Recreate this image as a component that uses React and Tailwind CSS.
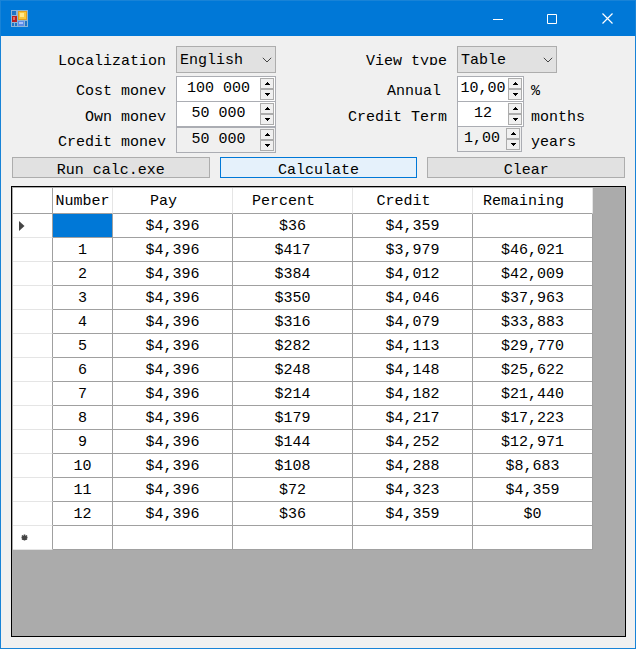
import React, { useState } from "react";

const rows = [
  ["", "$4,396", "$36", "$4,359", ""],
  ["1", "$4,396", "$417", "$3,979", "$46,021"],
  ["2", "$4,396", "$384", "$4,012", "$42,009"],
  ["3", "$4,396", "$350", "$4,046", "$37,963"],
  ["4", "$4,396", "$316", "$4,079", "$33,883"],
  ["5", "$4,396", "$282", "$4,113", "$29,770"],
  ["6", "$4,396", "$248", "$4,148", "$25,622"],
  ["7", "$4,396", "$214", "$4,182", "$21,440"],
  ["8", "$4,396", "$179", "$4,217", "$17,223"],
  ["9", "$4,396", "$144", "$4,252", "$12,971"],
  ["10", "$4,396", "$108", "$4,288", "$8,683"],
  ["11", "$4,396", "$72", "$4,323", "$4,359"],
  ["12", "$4,396", "$36", "$4,359", "$0"],
  ["", "", "", "", ""],
];

function AppIcon() {
  return (
    <svg width="17" height="17" viewBox="0 0 17 17" shapeRendering="crispEdges" aria-hidden="true">
      <rect width="17" height="17" fill="#8db5d6" />
      <rect x="1" y="1" width="4" height="4" fill="#1f74c4" />
      <rect x="7" y="1" width="9" height="9" fill="#e0a020" />
      <rect x="8" y="2" width="7" height="7" fill="#f8c83c" />
      <rect x="9" y="3" width="4" height="4" fill="#ffe88a" />
      <rect x="1" y="6" width="5" height="6" fill="#b82020" />
      <rect x="2" y="7" width="2" height="3" fill="#e06a60" />
      <rect x="1" y="13" width="2" height="3" fill="#1f74c4" />
      <rect x="4" y="13" width="2" height="3" fill="#1f74c4" />
      <rect x="7" y="11" width="6" height="5" fill="#5c8ce8" />
      <rect x="8" y="12" width="4" height="2" fill="#a8c4fa" />
      <rect x="14" y="11" width="2" height="5" fill="#1f74c4" />
    </svg>
  );
}

function Label({ htmlFor, className = "", children }) {
  return (
    <label htmlFor={htmlFor} className={`h-[19px] flex-1 overflow-hidden text-right leading-8 whitespace-nowrap ${className}`}>
      {children}
    </label>
  );
}

function Combo({ id, options }) {
  return (
    <div className="relative h-[27px] w-[100px]">
      <select id={id} className="h-full w-full appearance-none border border-[#adadad] bg-[#e1e1e1] pt-0.5 pl-[3px] leading-5 outline-none">
        {options.map((o) => (
          <option key={o}>{o}</option>
        ))}
      </select>
      <svg className="pointer-events-none absolute top-[11px] right-1" width="10" height="7" viewBox="0 0 10 7" fill="none" stroke="#444" aria-hidden="true">
        <path d="M.8.8 5 5 9.2.8" />
      </svg>
    </div>
  );
}

function Spinner({ id, value, className = "", disabled = false }) {
  const [text, setText] = useState(value);
  const arrow = "flex h-[11px] w-[14px] items-center justify-center border border-[#acacac] bg-[#f0f0f0]";
  return (
    <div className={`flex border-[#abadb3] pr-px ${disabled ? "bg-[#f0f0f0]" : "bg-white"} ${className}`}>
      <input
        id={id}
        value={text}
        readOnly={disabled}
        onChange={(e) => setText(e.target.value)}
        className="h-6 w-0 min-w-0 flex-1 bg-transparent text-center leading-6 outline-none"
      />
      <div className="flex flex-col justify-center">
        <button type="button" aria-label="Increase" className={arrow}>
          <svg width="5" height="3" viewBox="0 0 5 3" shapeRendering="crispEdges" aria-hidden="true">
            <path d="M2 0h1v1h1v1h1v1H0V2h1V1h1z" />
          </svg>
        </button>
        <button type="button" aria-label="Decrease" className={arrow}>
          <svg width="5" height="3" viewBox="0 0 5 3" shapeRendering="crispEdges" aria-hidden="true">
            <path d="M0 0h5v1H4v1H3v1H2V2H1V1H0z" />
          </svg>
        </button>
      </div>
    </div>
  );
}

function TitleBar() {
  return (
    <header className="flex h-[35px] items-center justify-between bg-[#0078d7] pl-2.5">
      <AppIcon />
      <div className="flex h-full text-white">
        <button aria-label="Minimize" className="flex w-[54px] items-center justify-center">
          <svg width="10" height="10" viewBox="0 0 10 10" stroke="currentColor" aria-hidden="true"><path d="M0 5.5h10" /></svg>
        </button>
        <button aria-label="Maximize" className="flex w-[54px] items-center justify-center">
          <svg width="10" height="10" viewBox="0 0 10 10" fill="none" stroke="currentColor" aria-hidden="true"><path d="M.5.5h9v9h-9z" /></svg>
        </button>
        <button aria-label="Close" className="flex w-[56px] items-center justify-center">
          <svg width="11" height="11" viewBox="0 0 11 11" stroke="currentColor" strokeWidth="1.2" aria-hidden="true"><path d="m.5.5 10 10M10.5.5l-10 10" /></svg>
        </button>
      </div>
    </header>
  );
}

function Schedule() {
  const head = "border-b border-b-[#a0a0a0] px-0 pt-0.5 pb-0 text-center font-normal";
  return (
    <div className="min-h-[451px] flex-1 overflow-hidden border border-black bg-[#ababab] pt-px pl-px">
      <table className="w-[580px] table-fixed border-separate border-spacing-0 bg-white">
        <colgroup>
          <col className="w-10" />
          <col className="w-[60px]" />
          <col className="w-[120px]" />
          <col className="w-[120px]" />
          <col className="w-[120px]" />
          <col className="w-[120px]" />
        </colgroup>
        <thead>
          <tr className="h-[26px]">
            <th className={`${head} border-r border-r-[#a0a0a0]`} />
            <th className={`${head} border-r border-r-[#e5e5e5]`}>Number</th>
            {["Pay", "Percent", "Credit", "Remaining"].map((t) => (
              <th key={t} className={`${head} border-r border-r-[#e5e5e5] pr-[18px]`}>{t}</th>
            ))}
          </tr>
        </thead>
        <tbody>
          {rows.map((r, i) => (
            <tr key={i} className="h-6">
              <th className="border-r border-b border-r-[#a0a0a0] border-b-[#e5e5e5] p-0 pl-1.5">
                {i === 0 && (
                  <svg width="6" height="10" viewBox="0 0 6 10" aria-label="Current row"><path d="M0 0v10l5.5-5z" fill="#444" /></svg>
                )}
                {i === rows.length - 1 && (
                  <svg className="ml-0.5" width="7" height="7" viewBox="0 0 7 7" stroke="#444" strokeWidth="1.6" aria-label="New row">
                    <path d="M3.5.5v6M1 1.5l5 4M1 5.5l5-4M.5 3.5h6" />
                  </svg>
                )}
              </th>
              {r.map((c, j) => (
                <td key={j} className={`border-r border-b border-[#a0a0a0] px-0 pt-0.5 pb-0 text-center ${i === 0 && j === 0 ? "bg-[#0078d7]" : ""}`}>
                  {c}
                </td>
              ))}
            </tr>
          ))}
        </tbody>
      </table>
    </div>
  );
}

export default function App() {
  const button = "h-[21px] flex-1 overflow-hidden border px-0 pt-1 leading-[17px]";
  return (
    <div className="flex min-h-screen flex-col border border-[#1883d7] bg-[#f0f0f0] font-['Liberation_Mono',monospace] text-[15px] leading-[17px] text-black">
      <TitleBar />
      <main className="flex flex-1 flex-col pt-2.5 pr-[9px] pb-[11px] pl-2.5">
        <form className="flex justify-between px-px">
          <div className="w-[264px]">
            <div className="mb-[3px] flex gap-2.5"><Label htmlFor="lang">Localization</Label><Combo id="lang" options={["English"]} /></div>
            <div className="flex gap-2.5"><Label htmlFor="cost">Cost money</Label><Spinner id="cost" value="100 000" className="w-[100px] border" /></div>
            <div className="flex gap-2.5"><Label htmlFor="own">Own money</Label><Spinner id="own" value="50 000" className="w-[100px] border border-t-0" /></div>
            <div className="flex gap-2.5"><Label htmlFor="credit">Credit money</Label><Spinner id="credit" value="50 000" disabled className="w-[100px] border" /></div>
          </div>
          <div className="w-[278px]">
            <div className="mb-[3px] flex"><Label htmlFor="view">View type</Label><div className="w-[178px] pl-2.5"><Combo id="view" options={["Table"]} /></div></div>
            <div className="flex">
              <Label htmlFor="annual" className="pr-1.5">Annual</Label>
              <div className="flex w-[178px] pl-2.5"><Spinner id="annual" value="10,00" className="w-[67px] border" /><span className="h-5 pl-[7px] leading-8">%</span></div>
            </div>
            <div className="flex">
              <Label htmlFor="term">Credit Term</Label>
              <div className="flex w-[178px] pl-2.5"><Spinner id="term" value="12" className="w-[67px] border border-t-0" /><span className="h-5 pl-[7px] leading-8">months</span></div>
            </div>
            <div className="flex justify-end">
              <div className="flex w-[168px]"><Spinner id="years" value="1,00" disabled className="w-[65px] border border-t-0" /><label htmlFor="years" className="h-5 pl-[9px] leading-8">years</label></div>
            </div>
          </div>
        </form>
        <div className="mt-1 mb-2 flex gap-2.5 px-px">
          <button className={`${button} border-[#adadad] bg-[#e1e1e1]`}>Run calc.exe</button>
          <button className={`${button} border-[#0078d7] bg-[#e5f1fb]`}>Calculate</button>
          <button className={`${button} border-[#adadad] bg-[#e1e1e1]`}>Clear</button>
        </div>
        <Schedule />
      </main>
    </div>
  );
}
